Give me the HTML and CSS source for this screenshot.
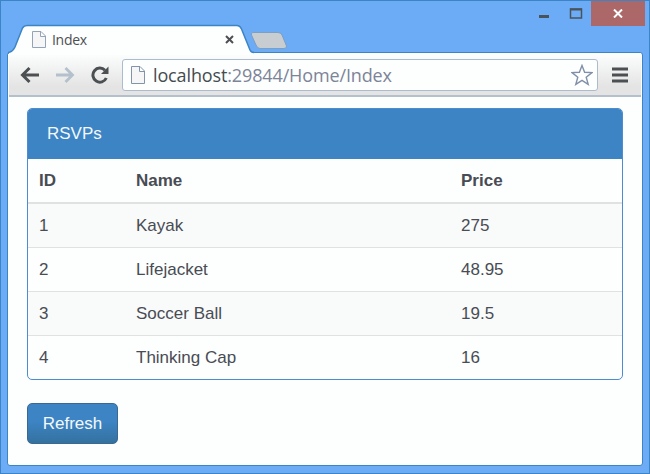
FILE: index.html
```html
<!DOCTYPE html>
<html lang="en">
<head>
<meta charset="utf-8">
<title>Index</title>
<link rel="stylesheet" href="styles.css">
</head>
<body>
<div class="window">
  <header class="titlebar">
    <div class="tab">
      <svg class="tab-shape" width="246" height="32" viewBox="0 0 246 32"><path d="M0 32V31Q0 29 2 29Q5 28 7 24L14.500 5Q16 2.500 19 2.500H229Q232 2.500 233.500 6L242 27Q243.500 30 246 30V32Z" fill="#fdfefe"/><path d="M0 31Q0 29 2 29Q5 28 7 24L14.500 5Q16 2.500 19 2.500H229Q232 2.500 233.500 6L242 27Q243 29.500 246 29.500" fill="none" stroke="#3c84c4" stroke-width="1.500"/></svg>
      <svg class="doc" width="14" height="17" viewBox="0 0 14 17"><path d="M.500 .500H9L13.500 5V16.500H.500ZM8.500 .500V5.500H13.500" fill="#f6f6f6" stroke="#94a4b8"/></svg>
      <span class="tab-title">Index</span>
      <svg class="tab-close" width="9" height="9" viewBox="0 0 9 9"><path d="M1 1L8 8M8 1L1 8" stroke="#4c5052" stroke-width="2"/></svg>
    </div>
    <svg class="new-tab" width="38" height="19" viewBox="0 0 38 19"><path d="M3 1.500H28Q31 1.500 32 4L36.500 15Q37 17.500 34 17.500H10Q7.500 17.500 6 14L1.500 4Q.500 1.500 3 1.500Z" fill="#c8cdd2" stroke="#7c9fc4"/></svg>
    <div class="controls">
      <svg class="minmax" width="46" height="14" viewBox="0 0 46 14"><path d="M1 10.500H11" stroke="#48545c" stroke-width="3"/><path d="M32.500 3H43.500V12H32.500Z" fill="none" stroke="#48545c" stroke-width="1.500"/><path d="M32 3.500H44" stroke="#48545c" stroke-width="2"/></svg>
      <div class="close"><svg width="10" height="9" viewBox="0 0 10 9"><path d="M1 .500L9 8.500M9 .500L1 8.500" stroke="#fff" stroke-width="2"/></svg></div>
    </div>
  </header>
  <main class="frame">
    <nav class="toolbar">
      <svg class="back" width="20" height="18" viewBox="0 0 20 18"><path d="M19 9H3M9.500 2L2.500 9L9.500 16" fill="none" stroke="#4c5052" stroke-width="3"/></svg>
      <svg class="forward" width="20" height="18" viewBox="0 0 20 18"><path d="M1 9H17M10.500 2L17.500 9L10.500 16" fill="none" stroke="#b4c0cc" stroke-width="2.800"/></svg>
      <svg class="reload" width="20" height="18" viewBox="0 0 20 18"><path d="M15 4.300A7 7 0 1 0 16.300 12" fill="none" stroke="#4c5052" stroke-width="3"/><path d="M18.500 .500V8H11Z" fill="#4c5052"/></svg>
      <div class="address">
        <svg class="doc-url" width="14" height="18" viewBox="0 0 14 18"><path d="M.500 .500H9L13.500 5V17.500H.500ZM8.500 .500V5.500H13.500" fill="#f6f6f6" stroke="#8294ac"/></svg>
        <span class="url"><b>localhost</b>:29844/Home/Index</span>
        <svg class="star" width="22" height="22" viewBox="0 0 22 22"><path d="M11 1.500L13.600 8.300L21 8.600L15.200 13.200L17.200 20.300L11 16.300L4.800 20.300L6.800 13.200L1 8.600L8.400 8.300Z" fill="#fff" stroke="#8090a8" stroke-width="1.400"/></svg>
      </div>
      <svg class="menu" width="16" height="16" viewBox="0 0 16 16"><path d="M0 2H16M0 8H16M0 14H16" stroke="#4c5052" stroke-width="3.200"/></svg>
    </nav>
    <section class="page">
      <div class="panel">
        <div class="panel-heading">RSVPs</div>
        <table>
          <thead><tr><th class="id">ID</th><th class="name">Name</th><th>Price</th></tr></thead>
          <tbody>
            <tr><td>1</td><td>Kayak</td><td>275</td></tr>
            <tr><td>2</td><td>Lifejacket</td><td>48.95</td></tr>
            <tr><td>3</td><td>Soccer Ball</td><td>19.5</td></tr>
            <tr><td>4</td><td>Thinking Cap</td><td>16</td></tr>
          </tbody>
        </table>
      </div>
      <button class="refresh">Refresh</button>
    </section>
  </main>
</div>
</body>
</html>
```
FILE: styles.css
```css
* { box-sizing: border-box; }
body { margin: 0; font-family: "Liberation Sans", Arial, sans-serif; }
svg { display: block; flex: none; }
.window {
  width: 650px;
  height: 474px;
  border: 1px solid #3c84c4;
  background: #6cabf5;
  padding: 0 6px 7px;
  display: flex;
  flex-direction: column;
}
.titlebar { height: 51px; flex: none; display: flex; align-items: flex-start; }
.tab {
  position: relative;
  z-index: 1;
  width: 246px;
  height: 32px;
  margin: 22px 0 0 1px;
  padding: 1px 20px 0 24px;
  display: flex;
  align-items: center;
}
.tab-shape { position: absolute; left: 0; top: 0; }
.doc { position: relative; }
.tab-title {
  position: relative;
  flex: 1;
  margin-left: 6px;
  font: 14px/18px "Open Sans", sans-serif;
  letter-spacing: -0.3px;
  color: #4c5052;
}
.tab-close { position: relative; }
.new-tab { margin: 30px 0 0 -4px; }
.controls { margin-left: auto; margin-right: -2px; display: flex; }
.minmax { margin: 5px 7px 0 0; }
.close {
  width: 54px;
  height: 25px;
  margin-right: 0;
  background: #ac6868;
  display: flex;
  align-items: center;
  justify-content: center;
}
.frame {
  flex: 1;
  border: 1px solid #3c84c4;
  border-radius: 3px;
  background: #fdfefe;
  padding: 0 1px;
}
.toolbar {
  height: 44px;
  display: flex;
  align-items: center;
  border-bottom: 2px solid #b4c0cc;
  background: linear-gradient(#fdfefe, #e4e4e4 80%);
  padding: 1px 13px 0 11px;
}
.forward { margin-left: 15px; }
.reload { margin-left: 15px; }
.address {
  flex: 1;
  height: 32px;
  margin: 0 14px 0 12px;
  padding: 0 4px 0 8px;
  border: 1px solid #acbccc;
  border-radius: 3px;
  background: #fdfefe;
  display: flex;
  align-items: center;
}
.url {
  flex: 1;
  margin-left: 8px;
  font: 18px/24px "Open Sans", sans-serif;
  letter-spacing: -0.13px;
  color: #7c8498;
  white-space: nowrap;
}
.url b { font-weight: 400; color: #444c50; }
.page { padding: 11px 18px 0; font-size: 17px; color: #484c54; }
.panel {
  height: 272px;
  border: 1px solid #4c8cd0;
  border-radius: 5px;
  overflow: hidden;
}
.panel-heading {
  height: 50px;
  padding: 0 19px;
  background: #3c84c4;
  color: #f4f8fa;
  line-height: 50px;
}
table { width: 100%; border-collapse: separate; border-spacing: 0; table-layout: fixed; }
th, td { height: 44px; padding: 0 11px; text-align: left; border-top: 1px solid #e0e2e2; }
th { height: 44px; border-top: 0; border-bottom: 1px solid #e0e2e2; }
tbody tr:nth-child(odd) { background: #f9fafa; }
.id { width: 97px; }
.name { width: 325px; }
.refresh {
  display: block;
  width: 91px;
  height: 41px;
  margin-top: 23px;
  padding: 0;
  border: 1px solid #3a6890;
  border-radius: 5px;
  background: linear-gradient(#3c84c4 45%, #34719f);
  color: #f4f8fa;
  font: inherit;
}
```
